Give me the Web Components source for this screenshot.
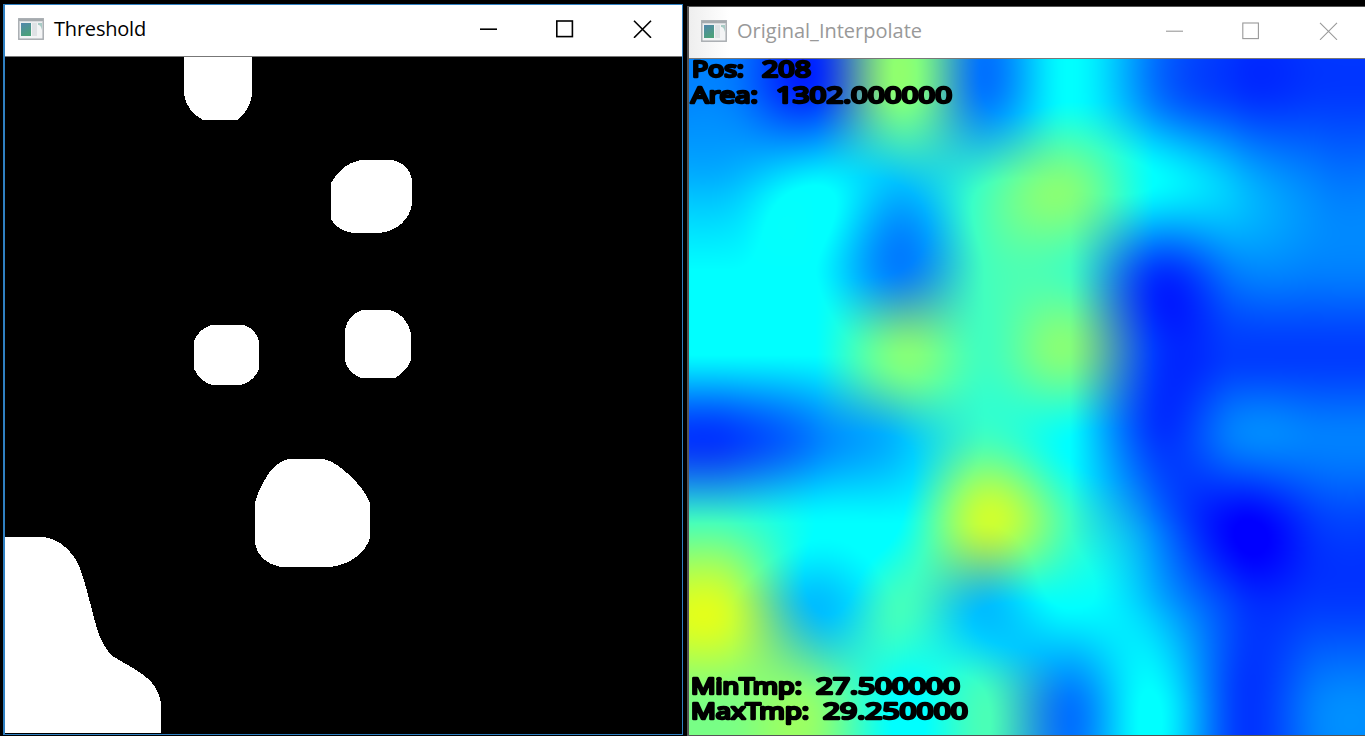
<!DOCTYPE html>
<html lang="en">
<head>
<meta charset="utf-8">
<title>Threshold</title>
<style>
html,body{margin:0;height:100%;background:#000;overflow:hidden}
</style>
</head>
<body>
<vision-desktop></vision-desktop>
<script>
class AppIcon extends HTMLElement{
  constructor(){
    super();
    this.attachShadow({mode:'open'}).innerHTML=`
<style>:host{display:block;width:26px;height:22px}svg{display:block}</style>
<svg width="26" height="22" viewBox="0 0 26 22">
<defs><linearGradient id="g" x2="0.4" y2="1"><stop stop-color="#5286ad"/><stop offset="1" stop-color="#4ba07b"/></linearGradient></defs>
<rect x=".8" y=".8" width="24.4" height="20.4" fill="#f3f4f5" stroke="#a8adb1" stroke-width="1.5"/>
<path d="M1 2h24" stroke="#a5aaae" stroke-width="2"/><path d="M2 3.7h22" stroke="#d3d6d9"/>
<rect x="3" y="5" width="10" height="13" fill="url(#g)"/>
<rect x="14" y="5" width="5" height="13" fill="#dfe2e5"/>
<path d="M20 5h4v7c-1-4-2-5-4-5z" fill="#a8cbc5"/>
</svg>`;
  }
}
customElements.define('app-icon',AppIcon);

class WindowControls extends HTMLElement{
  constructor(){
    super();
    this.attachShadow({mode:'open'}).innerHTML=`
<style>:host{display:block;width:172px;height:18px}svg{display:block}</style>
<svg width="172" height="18" fill="none" stroke="currentColor" stroke-width="var(--line,1.5)">
<path d="M0 9.2h17"/><rect x="76.8" y="1" width="15.6" height="15.6"/><path d="M154 .8l17 17M171 .8l-17 17"/>
</svg>`;
  }
}
customElements.define('window-controls',WindowControls);

class AppWindow extends HTMLElement{
  constructor(){
    super();
    this.attachShadow({mode:'open'}).innerHTML=`
<style>
:host{display:flex;flex-direction:column;box-sizing:border-box;background:#000;color:#000;font:20px/26px "Open Sans","Noto Sans",sans-serif}
header{display:flex;align-items:center;box-sizing:border-box;height:52px;padding:var(--bar,0 30px 3px 13px);background:var(--bar-bg,#fff);border-bottom:1px solid #777;flex:none}
.t{margin-left:10px;white-space:nowrap;letter-spacing:var(--track,0)}
window-controls{margin-left:auto}
main{flex:1;min-height:0}
</style>
<header><app-icon></app-icon><span class="t"></span><window-controls></window-controls></header>
<main><slot></slot></main>`;
  }
  connectedCallback(){this.shadowRoot.querySelector('.t').textContent=this.getAttribute('label')}
}
customElements.define('app-window',AppWindow);

class ThresholdMask extends HTMLElement{
  constructor(){
    super();
    this.attachShadow({mode:'open'}).innerHTML=`
<style>:host{display:block;width:676px;height:676px;background:#000}svg{display:block}</style>
<svg width="676" height="676" viewBox="5 57 676 676" fill="#fff" shape-rendering="crispEdges">
<path d="M184 57H252V95C250 106 245 115 237 120H203C193 115 185 105 184 94Z"/>
<path d="M361 160H393C404 163 410 169 412 180V204C410 219 397 232 378 233H353C342 231 334 226 331 219V183C337 171 348 162 361 160Z"/>
<path d="M211 325H244C252 328 257 333 259 341V369C256 377 249 383 241 385H212C204 383 198 377 194 369V341C197 333 203 328 211 325Z"/>
<path d="M362 310H390C401 313 408 321 411 333V360C408 368 402 374 395 378H361C353 375 347 369 345 361V329C347 320 353 313 362 310Z"/>
<path d="M288 459H324C332 461 341 467 347 473C357 482 366 492 370 503V537C367 551 352 564 331 567H281C266 564 257 556 255 543V502C258 492 263 482 269 473C274 466 281 461 288 459Z"/>
<path d="M5 537H44C59 539 73 551 80 568C86 584 91 608 97 629C101 641 106 651 114 657C122 662 134 668 142 674C154 682 159 691 161 703V733H5Z"/>
</svg>`;
  }
}
customElements.define('threshold-mask',ThresholdMask);

class HeatMap extends HTMLElement{
  constructor(){
    super();
    this.attachShadow({mode:'open'}).innerHTML=`
<style>
:host{display:block;position:relative;width:676px;height:676px}
canvas{display:block}
svg{position:absolute;left:0;top:0}
text{font:22.5px "Noto Sans","Open Sans",sans-serif;fill:#000;stroke:#000;stroke-width:2.6px;stroke-linejoin:round;white-space:pre}
</style>
<canvas width="676" height="676"></canvas>
<svg width="676" height="676" viewBox="689 59 676 676">
<text y="77"><tspan x="692" textLength="52" lengthAdjust="spacingAndGlyphs">Pos:</tspan> <tspan x="762" textLength="49" lengthAdjust="spacingAndGlyphs">208</tspan></text>
<text y="102.500"><tspan x="691" textLength="67" lengthAdjust="spacingAndGlyphs">Area:</tspan> <tspan x="776" textLength="176" lengthAdjust="spacingAndGlyphs">1302.000000</tspan></text>
<text y="693.500"><tspan x="691" textLength="111" lengthAdjust="spacingAndGlyphs">MinTmp:</tspan> <tspan x="816" textLength="144" lengthAdjust="spacingAndGlyphs">27.500000</tspan></text>
<text y="719"><tspan x="691" textLength="118" lengthAdjust="spacingAndGlyphs">MaxTmp:</tspan> <tspan x="823" textLength="145" lengthAdjust="spacingAndGlyphs">29.250000</tspan></text>
</svg>`;
  }
  connectedCallback(){
    /* 8x8 sensor readings as quarter-degree steps above the minimum */
    const cells=['21624211','34356432','44255122','44656111','12354122','54475201','73534311','66452412'];
    const ramp=[[0,0,255],[0,60,255],[0,128,255],[0,190,255],[0,255,255],[66,255,190],[130,255,124],[202,255,52]];
    const n=676,ctx=this.shadowRoot.querySelector('canvas').getContext('2d'),img=ctx.createImageData(n,n);
    const A=-0.75,k=t=>{t=Math.abs(t);return t<=1?((A+2)*t-(A+3))*t*t+1:t<2?((A*t-5*A)*t+8*A)*t-4*A:0};
    const taps=[];
    for(let i=0;i<n;i++){
      const f=(i+.5)*8/n-.5,b=Math.floor(f),list=[];
      for(let j=b-1;j<=b+2;j++)list.push([Math.max(0,Math.min(7,j)),k(f-j)]);
      taps.push(list);
    }
    for(let y=0;y<n;y++)for(let x=0;x<n;x++){
      let r=0,g=0,b=0;
      for(const [j,wy] of taps[y])for(const [i,wx] of taps[x]){
        const c=ramp[+cells[j][i]],w=wx*wy;r+=c[0]*w;g+=c[1]*w;b+=c[2]*w;
      }
      const o=(y*n+x)*4;img.data[o]=r;img.data[o+1]=g;img.data[o+2]=b;img.data[o+3]=255;
    }
    ctx.putImageData(img,0,0);
  }
}
customElements.define('heat-map',HeatMap);

class VisionDesktop extends HTMLElement{
  constructor(){
    super();
    this.attachShadow({mode:'open'}).innerHTML=`
<style>
:host{display:flex;align-items:flex-start;gap:4px;box-sizing:border-box;width:1365px;height:736px;padding:4px 0 0 3px;background:#000;overflow:hidden}
app-window{flex:none}
.a{width:680px;height:731px;border:1px solid #2f80c2;border-left-width:2px;--track:-.2px}
.b{width:679px;height:730px;margin-top:2px;border:1px solid #555;border-left:2px solid #555;border-right:0;color:#000;--bar-bg:linear-gradient(90deg,#eee,#fff 40px);--bar:0 28px 3px 12px;--line:1.1}
.a{--line:1.6}
</style>
<app-window class="a" label="Threshold"><threshold-mask></threshold-mask></app-window>
<app-window class="b" label="Original_Interpolate" style="color:#999"><heat-map></heat-map></app-window>`;
  }
}
customElements.define('vision-desktop',VisionDesktop);
</script>
</body>
</html>
